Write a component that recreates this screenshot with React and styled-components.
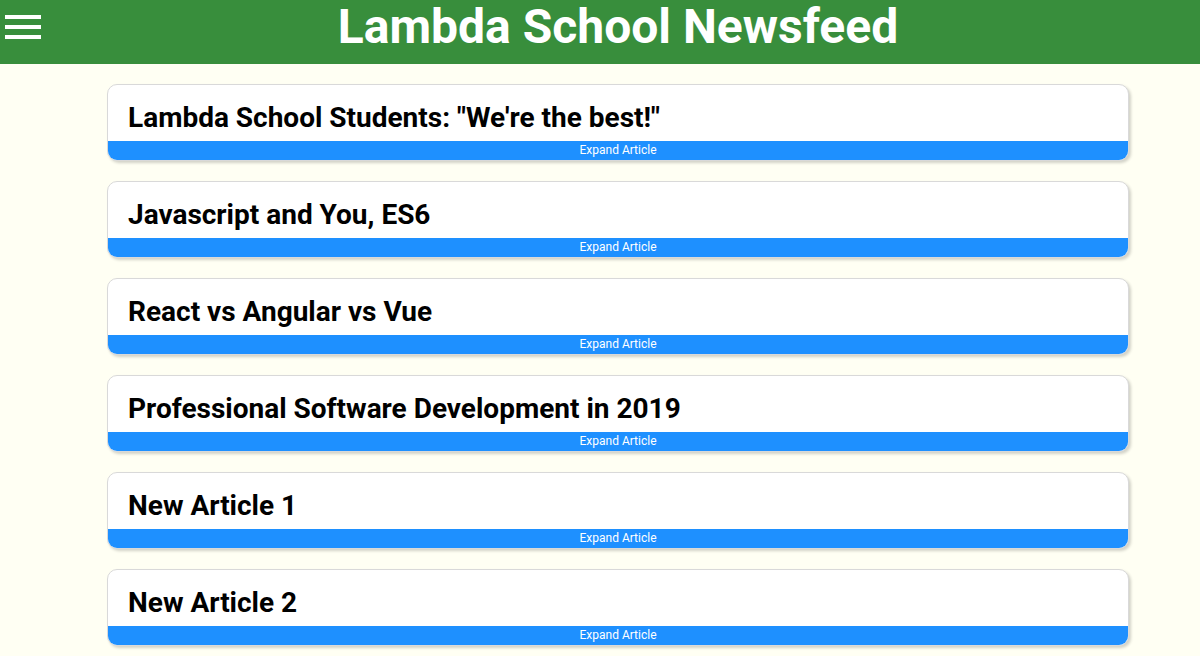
import React from "react";
import styled, { createGlobalStyle } from "styled-components";

const articles = [
  'Lambda School Students: "We\'re the best!"',
  "Javascript and You, ES6",
  "React vs Angular vs Vue",
  "Professional Software Development in 2019",
  "New Article 1",
  "New Article 2",
];

const App = () => {
  return (
    <>
      <GlobalStyle />
      <Header>
        <MenuButton>
          <svg width="36" height="24" viewBox="0 0 36 24">
            <rect x="0" y="0" width="36" height="4" fill="#fff" />
            <rect x="0" y="10" width="36" height="4" fill="#fff" />
            <rect x="0" y="20" width="36" height="4" fill="#fff" />
          </svg>
        </MenuButton>
        <Title>Lambda School Newsfeed</Title>
      </Header>

      <Articles>
        {articles.map((title) => (
          <Article key={title}>
            <ArticleTitle>{title}</ArticleTitle>
            <ExpandButton>Expand Article</ExpandButton>
          </Article>
        ))}
      </Articles>
    </>
  );
};

export default App;

const GlobalStyle = createGlobalStyle`
  html, body {
    margin: 0;
    padding: 0;
    background: #fffff3;
    font-family: Roboto, "Liberation Sans", sans-serif;
  }
`;

const Header = styled.header`
  display: flex;
  align-items: flex-start;
  height: 64px;
  background-color: #388e3c;
  padding-right: 5px;
`;

const MenuButton = styled.div`
  display: flex;
  margin: 15px 0 0 5px;
  width: 36px;
  height: 24px;
`;

const Title = styled.h1`
  flex: 1;
  margin: 3px 0 0;
  font-size: 48px;
  line-height: 48px;
  font-weight: 700;
  color: #fff;
  text-align: center;
`;

const Articles = styled.main`
  display: flex;
  flex-direction: column;
  gap: 20px;
  padding: 20px 71px 20px 107px;
`;

const Article = styled.div`
  display: flex;
  flex-direction: column;
  background: #fff;
  border: 1px solid #d9d9d9;
  border-radius: 10px;
  overflow: hidden;
  box-shadow: 2px 2px 3px rgba(0, 0, 0, 0.18);
`;

const ArticleTitle = styled.h2`
  margin: 0;
  padding: 17px 20px 7px;
  font-size: 28px;
  line-height: 32px;
  font-weight: 700;
  color: #000;
`;

const ExpandButton = styled.div`
  height: 19px;
  line-height: 19px;
  background: #1e90ff;
  color: #fff;
  font-size: 12px;
  text-align: center;
`;
